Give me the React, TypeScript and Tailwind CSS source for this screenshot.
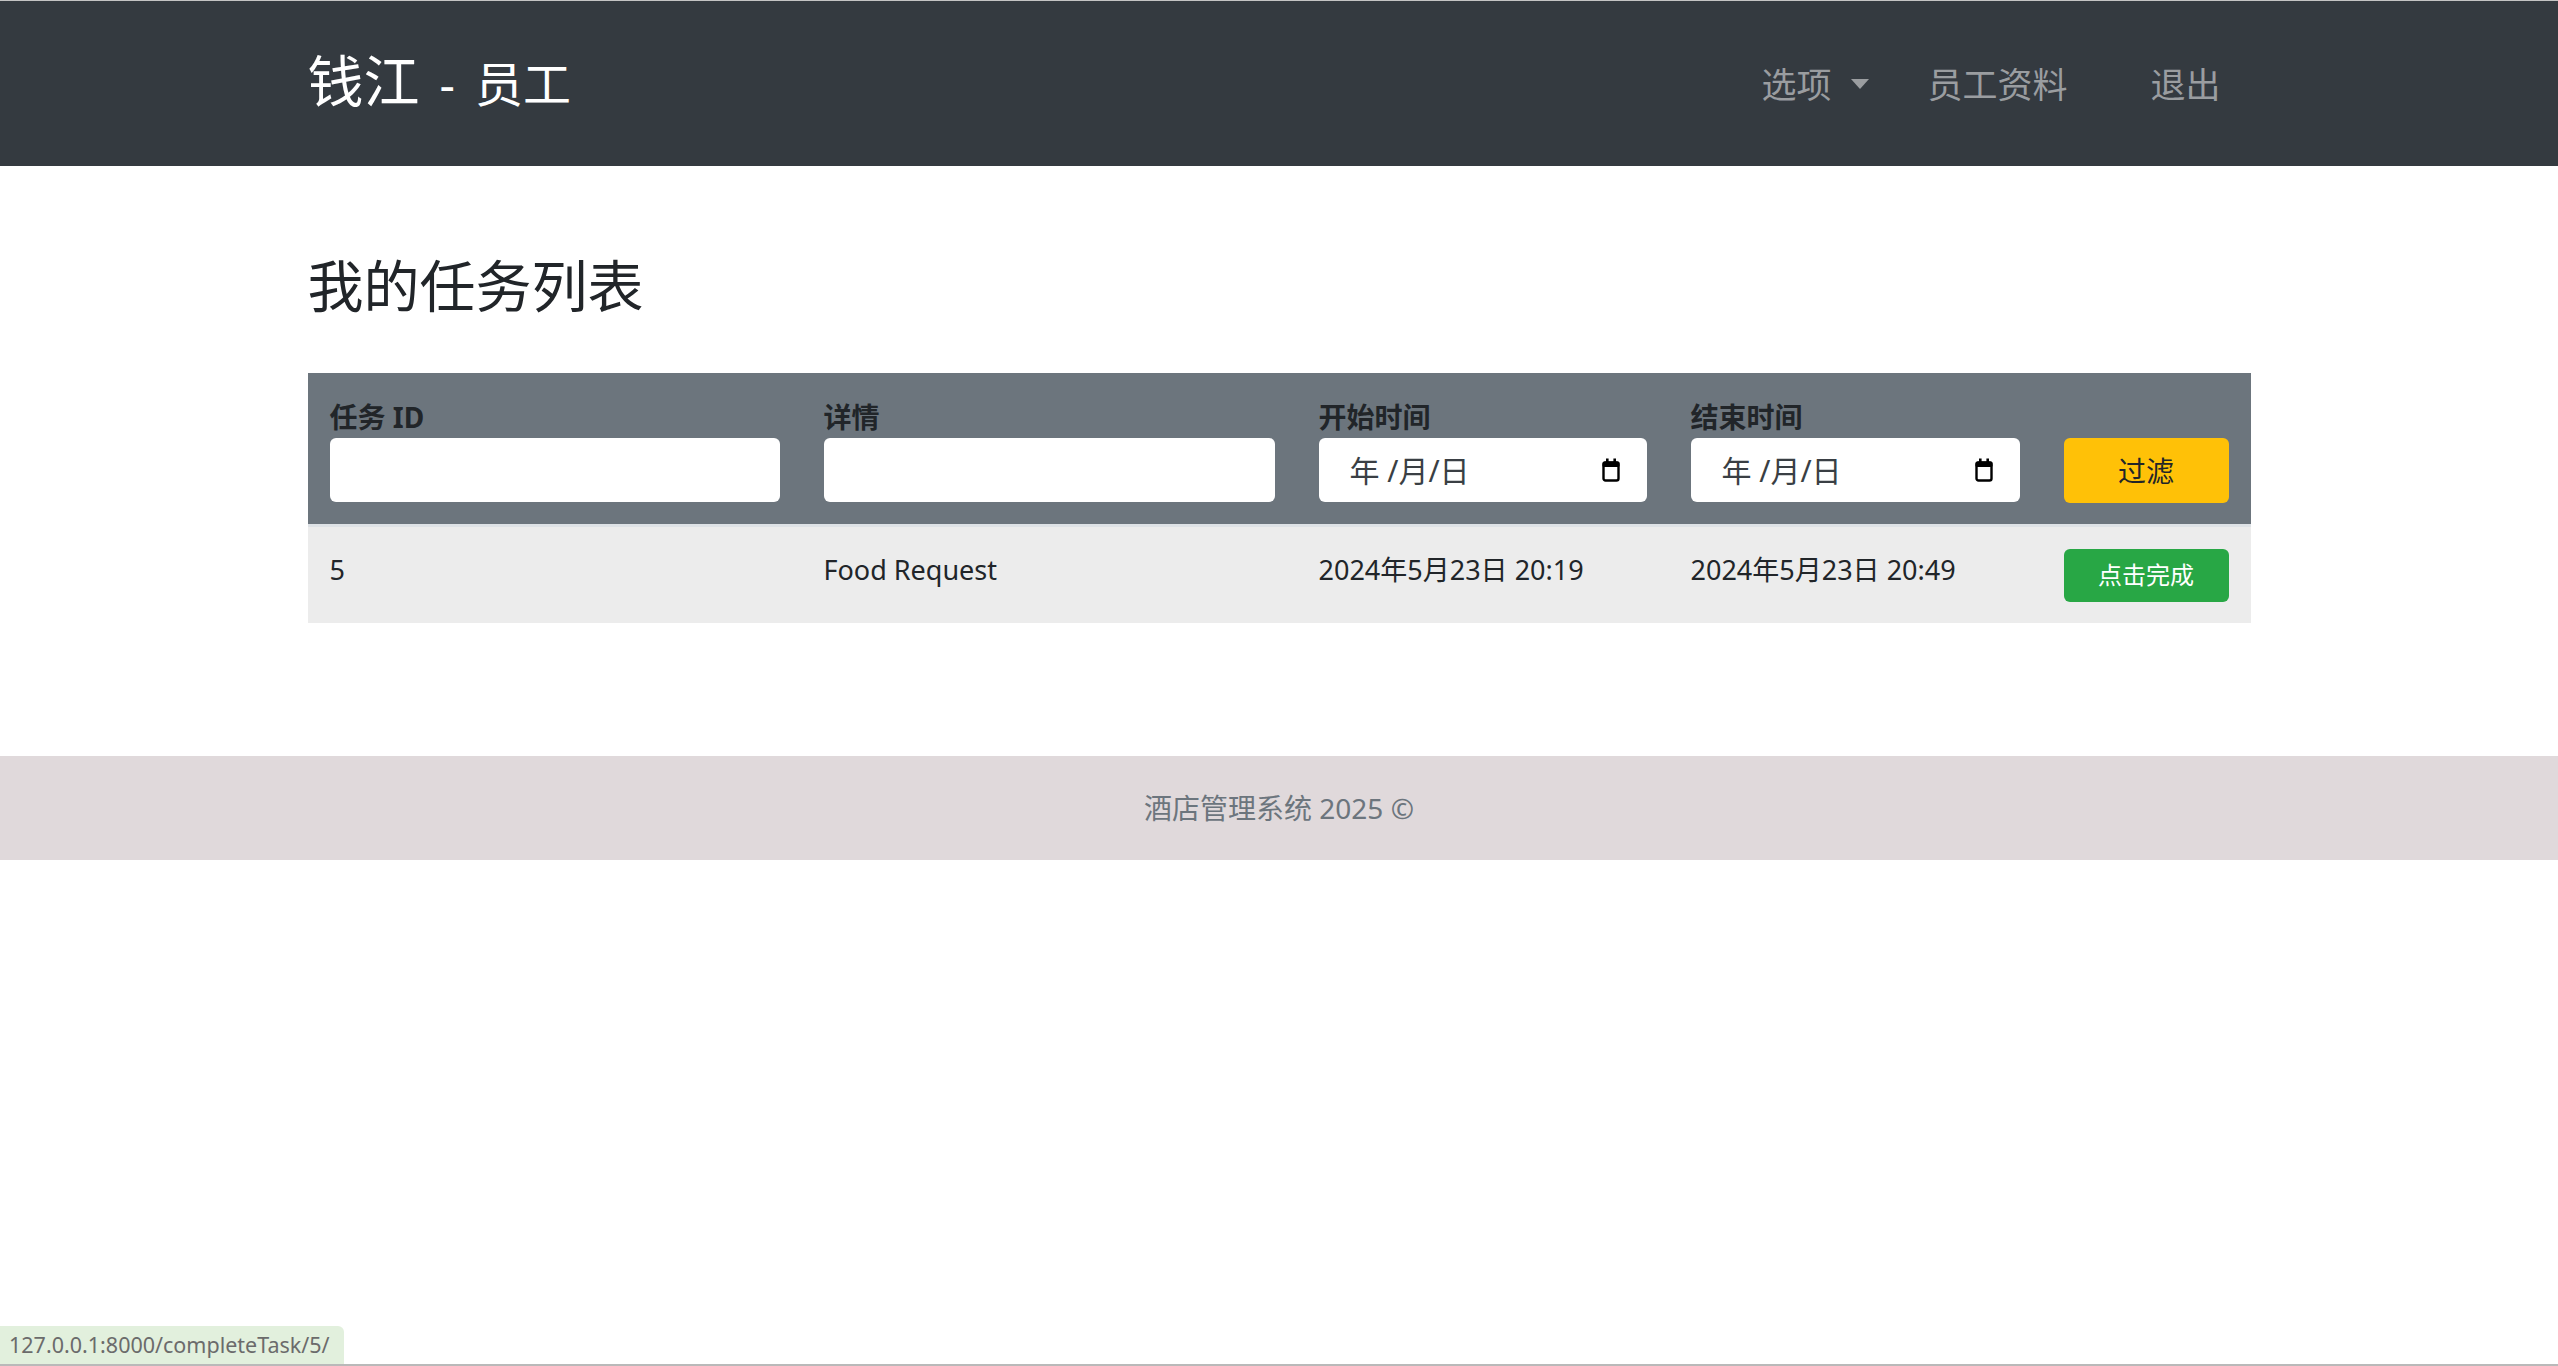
import React from "react";

const FONT = '"Noto Sans", "Noto Sans CJK SC", sans-serif';

function CalendarIcon() {
  return (
    <svg width="20" height="24" viewBox="0 0 20 24" className="shrink-0">
      <rect x="2.5" y="4.5" width="15" height="18" rx="2" fill="none" stroke="#000" strokeWidth="2.4" />
      <rect x="1.5" y="3.5" width="17" height="5.5" rx="1.5" fill="#000" />
      <rect x="5" y="0.5" width="2.6" height="4" fill="#000" />
      <rect x="12.4" y="0.5" width="2.6" height="4" fill="#000" />
    </svg>
  );
}

function DateBox() {
  return (
    <div className="flex h-[64px] w-full items-center justify-between rounded-[6px] bg-white pl-[31px] pr-[26px]">
      <span className="text-[30px] text-[#3a3f44]">年 /月/日</span>
      <CalendarIcon />
    </div>
  );
}

function Label({ children }: { children?: React.ReactNode }) {
  return (
    <div className="mb-[1px] h-[40px] text-[28px] font-bold leading-[40px] text-[#212529]">{children}</div>
  );
}

export default function App() {
  return (
    <div className="min-h-[1366px] bg-white" style={{ fontFamily: FONT }}>
      <div className="h-px bg-[#c4c4c4]" />
      <nav className="h-[165px] bg-[#343a40]">
        <div className="mx-auto flex h-full w-[1943px] items-center justify-between">
          <div className="flex items-baseline pb-[8px] text-white">
            <span className="text-[56px] leading-none">钱江</span>
            <span className="ml-[20px] text-[48px] leading-none">-</span>
            <span className="ml-[20px] text-[48px] leading-none">员工</span>
          </div>
          <div className="flex items-center pt-[4px] pr-[30px] text-[35px] text-[#9a9da0]">
            <div className="flex items-center">
              <span>选项</span>
              <svg width="18" height="10" viewBox="0 0 18 10" className="ml-[20px] mb-[4px]">
                <polygon points="0,0 18,0 9,10" fill="#9a9da0" />
              </svg>
            </div>
            <span className="ml-[58px]">员工资料</span>
            <span className="ml-[83px]">退出</span>
          </div>
        </div>
      </nav>

      <main className="mx-auto w-[1943px] pt-[86px]">
        <h2 className="mb-[54px] h-[67px] text-[56px] leading-[67px] text-[#212529]">我的任务列表</h2>

        <div className="grid grid-cols-[494px_495px_372px_373px_209px] border-b-[3px] border-[#dee2e6] bg-[#6c757d] pt-[24px] pb-[21px]">
          <div className="px-[22px]">
            <Label>任务 ID</Label>
            <div className="h-[64px] rounded-[6px] bg-white" />
          </div>
          <div className="px-[22px]">
            <Label>详情</Label>
            <div className="h-[64px] rounded-[6px] bg-white" />
          </div>
          <div className="px-[22px]">
            <Label>开始时间</Label>
            <DateBox />
          </div>
          <div className="px-[22px]">
            <Label>结束时间</Label>
            <DateBox />
          </div>
          <div className="px-[22px]">
            <Label />
            <button className="h-[65px] w-full rounded-[6px] bg-[#ffc107] text-[28px] text-[#212529]">过滤</button>
          </div>
        </div>

        <div className="grid h-[96px] grid-cols-[494px_495px_372px_373px_209px] items-center bg-[#ececec] text-[27px] text-[#212529]">
          <div className="mb-[9px] px-[22px]">5</div>
          <div className="mb-[9px] px-[22px]">Food Request</div>
          <div className="mb-[9px] px-[22px]">2024年5月23日 20:19</div>
          <div className="mb-[9px] px-[22px]">2024年5月23日 20:49</div>
          <div className="px-[22px]">
            <button className="h-[53px] w-full rounded-[6px] bg-[#28a745] text-[24px] text-white">点击完成</button>
          </div>
        </div>
      </main>

      <footer className="mt-[133px] flex h-[104px] items-center justify-center bg-[#e0d9db] text-[28px] text-[#6c757d]">
        酒店管理系统 2025 ©
      </footer>

      <div className="fixed bottom-[2px] left-0 flex h-[38px] items-center rounded-tr-[6px] bg-[#e2f0dd] pl-[9px] pr-[14px] text-[21.5px] text-[#6b6b6b]">
        127.0.0.1:8000/completeTask/5/
      </div>
      <div className="fixed bottom-0 left-0 h-[2px] w-full bg-[#b9b9b9]" />
    </div>
  );
}
